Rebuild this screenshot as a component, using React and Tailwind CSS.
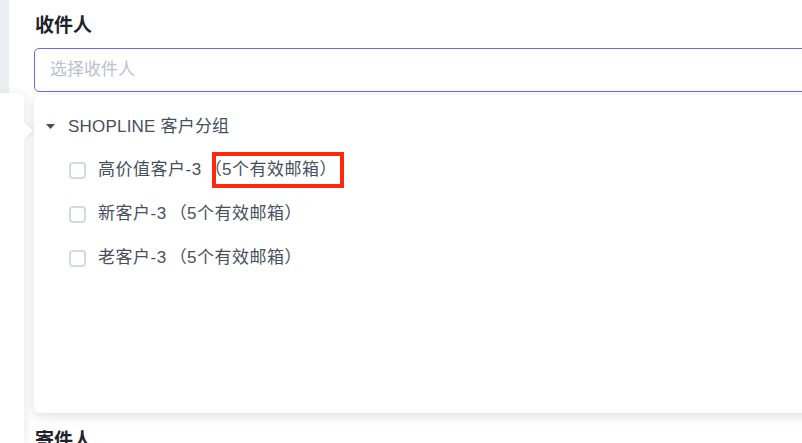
import React from 'react'

const groups = ['高价值客户-3', '新客户-3', '老客户-3']

export default function App() {
  return (
    <div
      className="relative w-[802px] h-[443px] overflow-hidden bg-white flex"
      style={{ fontFamily: '"Liberation Sans", "Noto Sans CJK SC", sans-serif' }}
    >
      {/* left nav strip */}
      <div className="w-[9px] h-full bg-[#eceef2] shrink-0" />

      <div className="flex-1 pl-[25px] pt-[14px]">
        <p className="text-[19px] leading-[24px] font-semibold text-[#1f2329] pl-px">收件人</p>

        <div className="relative mt-[10px] w-[800px]">
          <div className="h-[44px] border border-[#7263ff] rounded-[5px] px-[15px] flex items-center text-[17px] text-[#bcc1cc]">
            选择收件人
          </div>

          {/* dropdown */}
          <div className="absolute left-0 top-[47px] w-[800px] h-[318px] bg-white rounded-[6px] shadow-[0_3px_12px_rgba(0,0,0,0.13)] pt-[10px]">
            <div className="h-[43px] flex items-center pl-[12px] gap-[13px] text-[17px] text-[#474f5e] tracking-[0.2px]">
              <svg width="9" height="5" viewBox="0 0 9 5">
                <path d="M0 0h9L4.5 5z" fill="#474f5e" />
              </svg>
              <span>SHOPLINE 客户分组</span>
            </div>
            {groups.map(name => (
              <div key={name} className="h-[44px] flex items-center pl-[35px] gap-[12px] text-[17px] text-[#474f5e] tracking-[0.5px]">
                <span className="w-[17px] h-[17px] rounded-[4px] border-2 border-[#d5d9e6] bg-white shrink-0" />
                <span>
                  {name}
                  <span className="pl-[3px]">（5个有效邮箱）</span>
                </span>
              </div>
            ))}

            {/* annotation */}
            <div className="absolute left-[178px] top-[57px] w-[132px] h-[36px] border-[4px] border-[#ff2a0c]" />
          </div>
        </div>

        <p className="mt-[337px] text-[19px] leading-[24px] font-semibold text-[#1f2329] pl-px">寄件人</p>
      </div>

      {/* neighbouring popover on the left */}
      <div className="absolute left-0 top-[93px] bottom-0 w-[24px] bg-white rounded-tr-[6px] shadow-[2px_0_8px_rgba(0,0,0,0.08)]">
        <div className="absolute right-[-6px] top-[31px] w-[13px] h-[13px] rotate-45 bg-white shadow-[2px_-2px_4px_rgba(0,0,0,0.05)]" />
      </div>
    </div>
  )
}
